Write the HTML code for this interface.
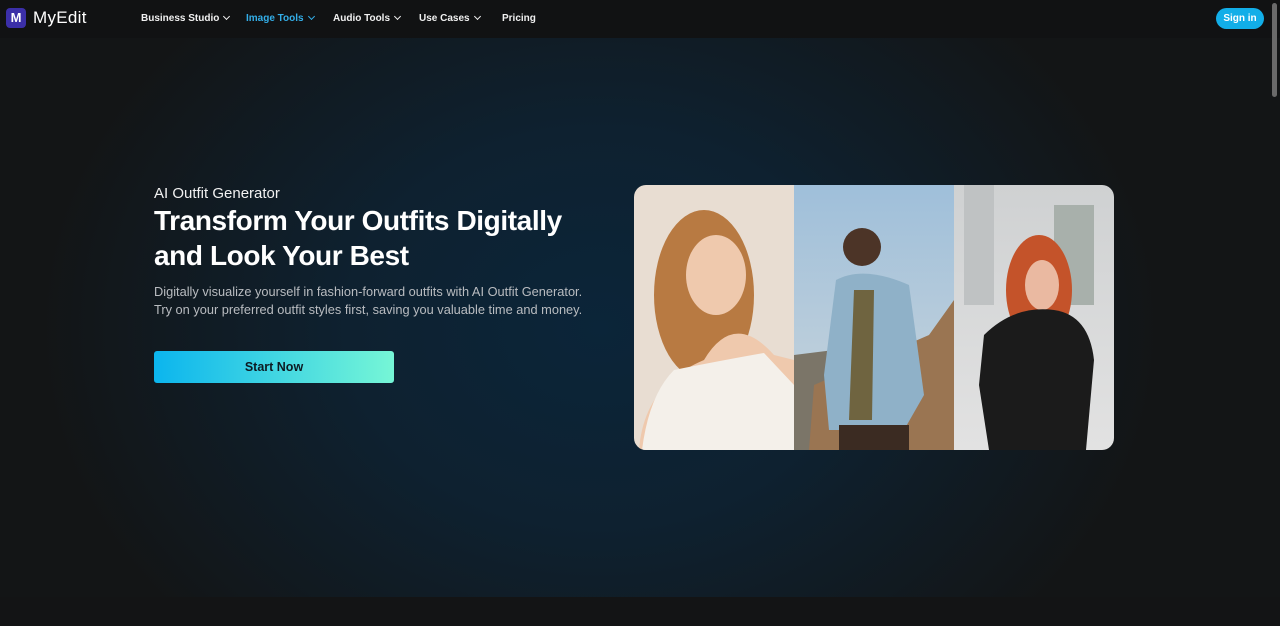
<!DOCTYPE html>
<html><head><meta charset="utf-8"><style>
*{margin:0;padding:0;box-sizing:border-box}
html,body{width:1280px;height:626px;overflow:hidden;background:#131415;font-family:"Liberation Sans",sans-serif;color:#fff}
.hdr{position:absolute;left:0;top:0;width:1280px;height:38px;background:#111213;z-index:2}
.logo{position:absolute;left:6px;top:8px;width:20px;height:20px;border-radius:4px;background:#3b2fa8;color:#fff;font-size:13px;font-weight:bold;text-align:center;line-height:20px}
.brand{position:absolute;left:33px;top:8px;font-size:17px;color:#fff;letter-spacing:.3px}
.nav{position:absolute;top:13px;font-size:10px;font-weight:bold;color:#f0f0f0}
.nav.a{color:#33aee8}
.chev{display:inline-block;width:5px;height:5px;border-right:1.3px solid currentColor;border-bottom:1.3px solid currentColor;transform:rotate(45deg);margin-left:5px;position:relative;top:-2px}
.sign{position:absolute;left:1216px;top:8px;width:48px;height:21px;border-radius:11px;background:#12aee8;font-size:10px;font-weight:bold;text-align:center;line-height:21px}
.sb{position:absolute;left:1272px;top:3px;width:5px;height:94px;border-radius:3px;background:#6a6a6a;z-index:3}
.hero{position:absolute;left:0;top:38px;width:1280px;height:559px;background:radial-gradient(ellipse 560px 440px at 600px 290px,#0b2539 0%,#0e2130 45%,#131516 100%)}
.sub{position:absolute;left:154px;top:185px;font-size:15px;color:#f2f2f2}
h1{position:absolute;left:154px;top:203px;font-size:28px;line-height:35px;font-weight:bold;letter-spacing:-.4px;color:#fff}
.p{position:absolute;left:154px;top:283px;font-size:12.8px;line-height:18px;color:#b9bcc0}
.btn{position:absolute;left:154px;top:351px;width:240px;height:32px;border-radius:3px;background:linear-gradient(90deg,#0bb5ee,#76f6d6);color:#0d1a22;font-size:12.5px;font-weight:bold;text-align:center;line-height:32px}
.ph{position:absolute;left:634px;top:185px;width:480px;height:265px;border-radius:12px;overflow:hidden}
</style></head><body>
<div class="hdr">
<div class="logo">M</div><div class="brand">MyEdit</div>
<div class="nav" style="left:141px">Business Studio<span class="chev"></span></div>
<div class="nav a" style="left:246px">Image Tools<span class="chev"></span></div>
<div class="nav" style="left:333px">Audio Tools<span class="chev"></span></div>
<div class="nav" style="left:419px">Use Cases<span class="chev"></span></div>
<div class="nav" style="left:502px">Pricing</div>
<div class="sign">Sign in</div>
</div>
<div class="sb"></div>
<div class="hero"></div>
<div class="sub">AI Outfit Generator</div>
<h1>Transform Your Outfits Digitally<br>and Look Your Best</h1>
<div class="p">Digitally visualize yourself in fashion-forward outfits with AI Outfit Generator.<br>Try on your preferred outfit styles first, saving you valuable time and money.</div>
<div class="btn">Start Now</div>
<div class="ph"><svg width="480" height="265" viewBox="0 0 480 265">
<defs><linearGradient id="sky" x1="0" y1="0" x2="0" y2="1"><stop offset="0" stop-color="#9fbfda"/><stop offset="1" stop-color="#cbd6dc"/></linearGradient>
<linearGradient id="g3" x1="0" y1="0" x2="0" y2="1"><stop offset="0" stop-color="#cfd1d2"/><stop offset="1" stop-color="#e2e2e2"/></linearGradient></defs>
<rect width="160" height="265" fill="#e8ddd2"/>
<ellipse cx="70" cy="110" rx="50" ry="85" fill="#b87a42"/>
<ellipse cx="82" cy="90" rx="30" ry="40" fill="#efc9ad"/>
<path d="M70 175 Q100 125 140 170 L160 175 L160 265 L5 265 Q10 200 70 175Z" fill="#efc9ad"/>
<path d="M40 185 Q90 175 130 168 L160 200 L160 265 L8 265 Q15 210 40 185Z" fill="#f4f0ea"/>
<rect x="160" width="160" height="265" fill="url(#sky)"/>
<path d="M160 170 L200 165 L200 265 L160 265Z" fill="#7b7568"/>
<path d="M295 150 L320 115 L320 265 L175 265 L180 200Z" fill="#9a7552"/>
<circle cx="228" cy="62" r="19" fill="#4c3427"/>
<path d="M202 95 Q230 80 275 100 L290 210 L270 245 L195 245 L190 190Z" fill="#8fb1c8"/>
<path d="M220 105 L240 105 L238 235 L215 235Z" fill="#6f6440"/>
<rect x="205" y="240" width="70" height="25" fill="#3b2b22"/>
<rect x="320" width="160" height="265" fill="url(#g3)"/>
<rect x="330" y="0" width="30" height="120" fill="#bfc2c3"/>
<rect x="420" y="20" width="40" height="100" fill="#a8b0ab"/>
<ellipse cx="405" cy="105" rx="33" ry="55" fill="#c4532a"/>
<ellipse cx="408" cy="100" rx="17" ry="25" fill="#eab9a1"/>
<path d="M350 150 Q380 120 420 125 Q455 130 460 175 L452 265 L355 265 L345 200Z" fill="#1b1b1b"/>
</svg></div>
</body></html>
